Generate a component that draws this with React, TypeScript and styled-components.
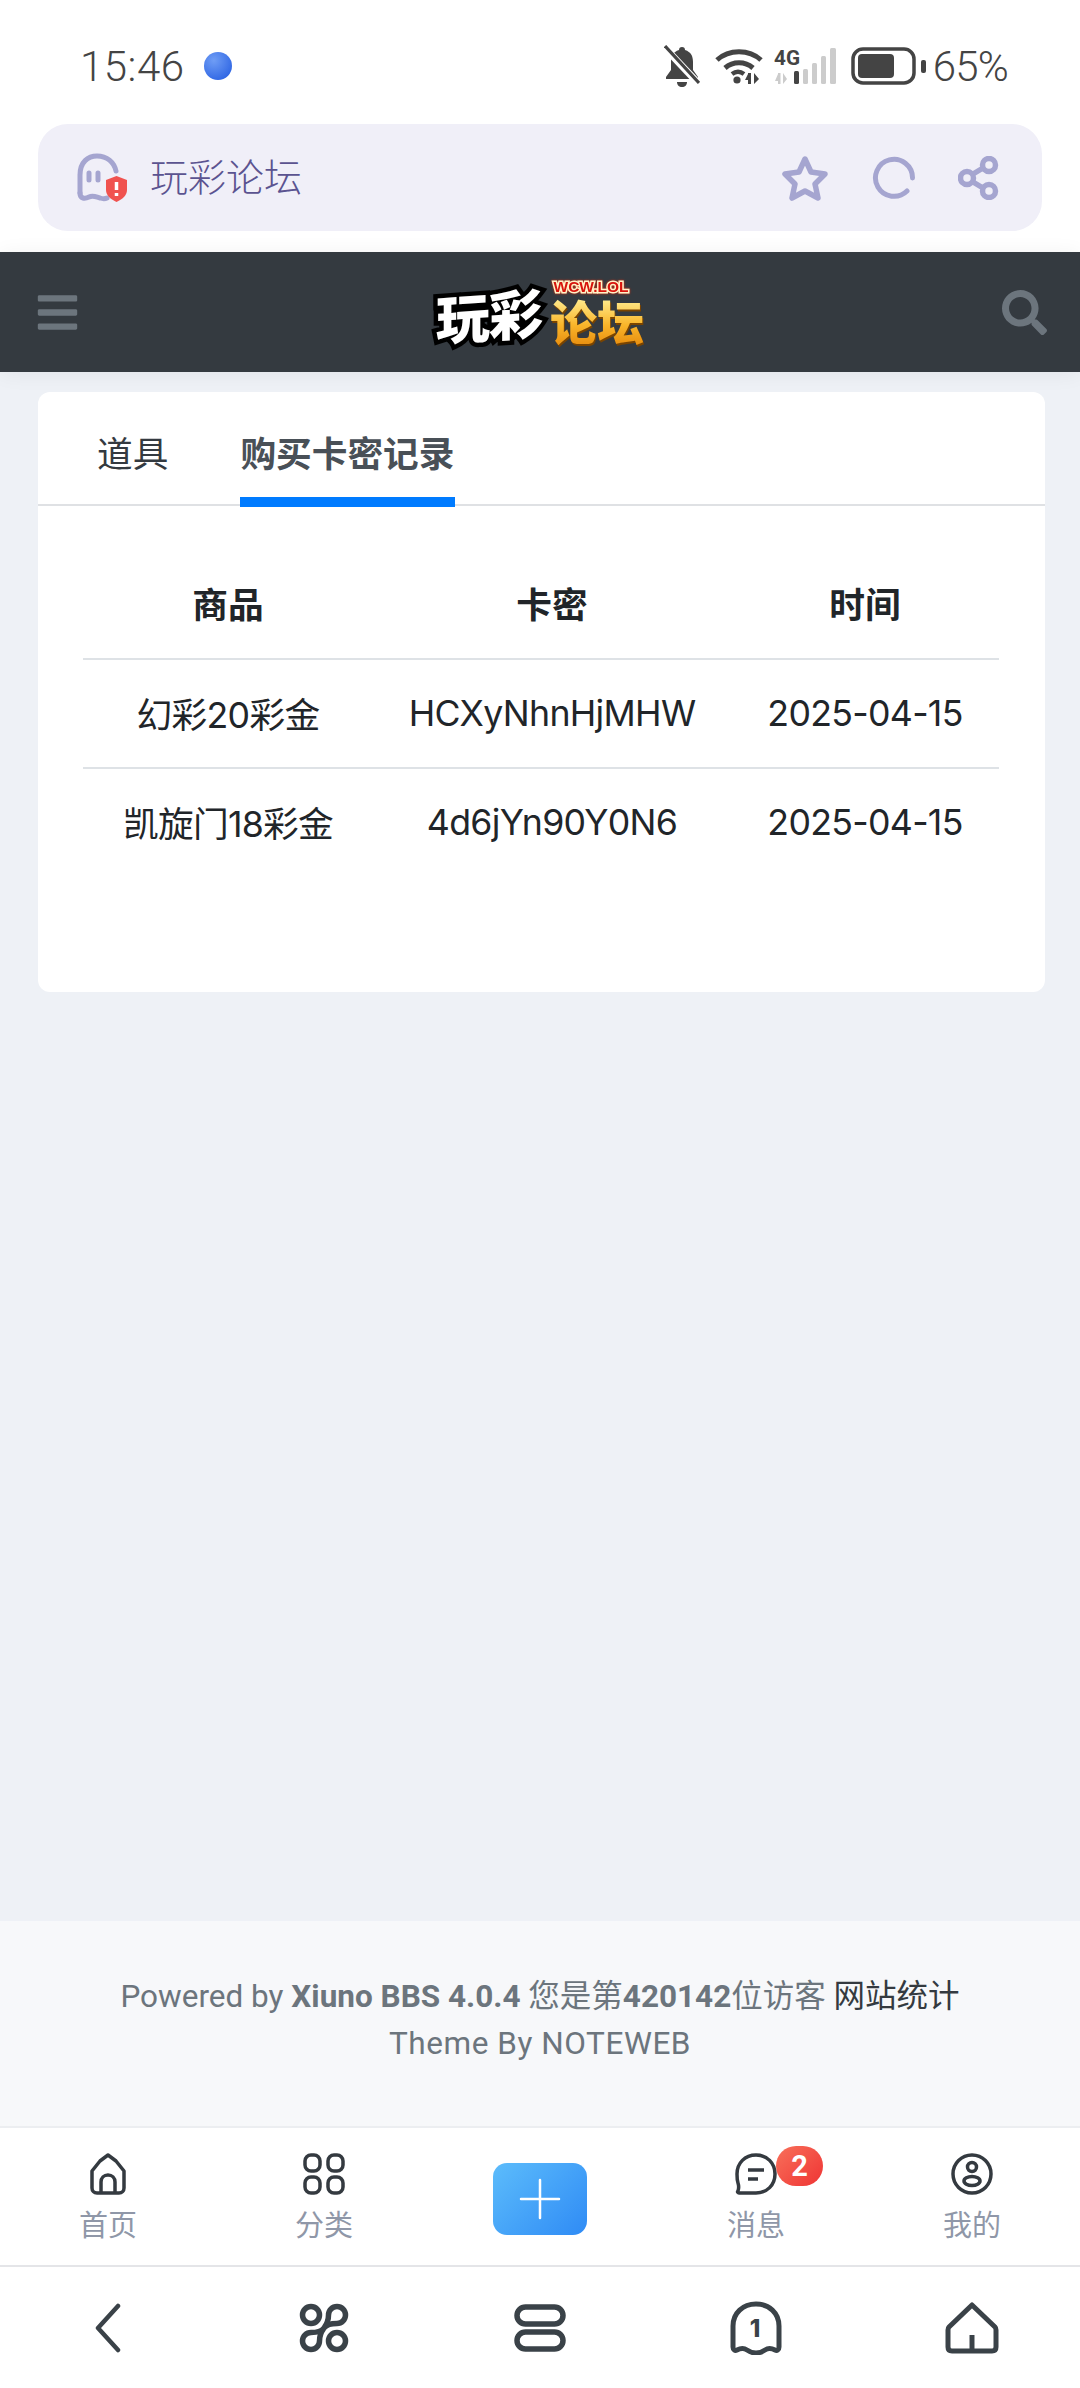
import React from "react";
import styled, { createGlobalStyle } from "styled-components";
import { FaBars, FaSearch } from "react-icons/fa";

const CJK = `Roboto, "Noto Sans CJK SC", sans-serif`;

const GlobalStyle = createGlobalStyle`
  html, body {
    margin: 0;
    padding: 0;
  }

  body {
    background: #eef1f6;
    font-family: ${CJK};
  }
`;

const records = [
  { name: "幻彩20彩金", code: "HCXyNhnHjMHW", date: "2025-04-15" },
  { name: "凯旋门18彩金", code: "4d6jYn90Y0N6", date: "2025-04-15" },
];

const App = () => {
  return (
    <Page>
      <GlobalStyle />
      <BrowserTop>
        <StatusBar>
          <StatusLeft>
            <Clock>15:46</Clock>
            <PlanetDot />
          </StatusLeft>
          <StatusRight>
            <svg width="36" height="42" viewBox="0 0 36 42">
              <path d="M18 2c2 0 3 1 3 3 6 2 8 6 8 12v8l5 7v2H2v-2l5-7v-8c0-6 2-10 8-12 0-2 1-3 3-3z" fill="#444" />
              <path d="M13 37h10c0 3-2 5-5 5s-5-2-5-5z" fill="#444" />
              <path d="M1 3l33 35" stroke="#fff" strokeWidth="7" />
              <path d="M1 1l34 37" stroke="#444" strokeWidth="3.2" />
            </svg>
            <WifiIcon width="48" height="36" viewBox="0 0 48 36">
              <path d="M2 12C14 1 34 1 46 12" stroke="#444" strokeWidth="5" fill="none" />
              <path d="M10 20c8-7 20-7 28 0" stroke="#444" strokeWidth="5" fill="none" />
              <path d="M17 26c4-3 8-3 12 0" stroke="#444" strokeWidth="4.5" fill="none" />
              <circle cx="22" cy="32" r="3.6" fill="#444" />
              <path d="M33 36V25h3v11zM30 32l3-6v6zM39 25v11l5-5z" fill="#444" />
            </WifiIcon>
            <svg width="62" height="38" viewBox="0 0 62 38">
              <text x="0" y="18" fontFamily="Roboto, sans-serif" fontWeight="700" fontSize="20" textLength="26" lengthAdjust="spacingAndGlyphs" fill="#444">4G</text>
              <path d="M4 37V26h2.500v11zM1 34l3-7v7zM9 26v11l4-5z" fill="#ccc" />
              <rect x="20" y="24" width="5" height="13" rx="1.500" fill="#444" />
              <rect x="29" y="22" width="5" height="15" rx="1.500" fill="#ccc" />
              <rect x="38" y="16" width="5" height="21" rx="1.500" fill="#ccc" />
              <rect x="47" y="9" width="5" height="28" rx="1.500" fill="#ccc" />
              <rect x="56" y="1" width="6" height="36" rx="1.500" fill="#ccc" />
            </svg>
            <BatteryIcon width="75" height="38" viewBox="0 0 75 38">
              <rect x="2" y="2" width="61" height="34" rx="10" fill="none" stroke="#444" strokeWidth="3.500" />
              <rect x="7" y="7" width="36" height="24" rx="4" fill="#444" />
              <rect x="70" y="13" width="5" height="13" rx="2" fill="#444" />
            </BatteryIcon>
            <Percent>65%</Percent>
          </StatusRight>
        </StatusBar>
        <UrlBar>
          <UrlTitle>
            <svg width="52" height="50" viewBox="0 0 52 50">
              <path d="M3 40V22C3 9 11 3 20 3c10 0 17 6 19 15" fill="none" stroke="#a5a5d0" strokeWidth="5" strokeLinecap="round" />
              <path d="M3 40c0 6 5 6 9 4s7 0 11 1c3 1 5 1 7 0" fill="none" stroke="#a5a5d0" strokeWidth="5" strokeLinecap="round" />
              <path d="M12 20v7M21 20v7" stroke="#a5a5d0" strokeWidth="5" strokeLinecap="round" />
              <path d="M39.500 23l10.500 4v10c0 5-4 9-10.500 12-6.500-3-10.500-7-10.500-12V27z" fill="#f0524f" />
              <path d="M39.500 29v8M39.500 40v3" stroke="#fff" strokeWidth="3.500" />
            </svg>
            <UrlText>玩彩论坛</UrlText>
          </UrlTitle>
          <UrlActions>
            <svg width="48" height="46" viewBox="0 0 48 46">
              <path d="M24 4l6 13 14 2-10 10 3 14-13-7-13 7 3-14L4 19l14-2z" fill="none" stroke="#a5a5d0" strokeWidth="5.500" strokeLinejoin="round" />
            </svg>
            <svg width="44" height="44" viewBox="0 0 44 44">
              <path d="M40.500 22A18.500 18.500 0 1 0 35 35" fill="none" stroke="#a5a5d0" strokeWidth="5" strokeLinecap="round" />
            </svg>
            <svg width="42" height="44" viewBox="0 0 42 44">
              <circle cx="9" cy="22" r="6.500" fill="none" stroke="#a5a5d0" strokeWidth="5.500" />
              <circle cx="31" cy="9" r="6.500" fill="none" stroke="#a5a5d0" strokeWidth="5.500" />
              <circle cx="31" cy="35" r="6.500" fill="none" stroke="#a5a5d0" strokeWidth="5.500" />
              <path d="M15 18l10-6M15 26l10 6" stroke="#a5a5d0" strokeWidth="5.500" />
            </svg>
          </UrlActions>
        </UrlBar>
      </BrowserTop>

      <SiteHeader>
        <FaBars size={45} color="#6c757d" />
        <Logo>
          <LogoWhite>玩彩</LogoWhite>
          <LogoGoldColumn>
            <LogoTag>WCW.LOL</LogoTag>
            <LogoGold>论坛</LogoGold>
          </LogoGoldColumn>
        </Logo>
        <FaSearch size={45} color="#6c757d" />
      </SiteHeader>

      <Main>
        <Card>
          <Tabs>
            <Tab>道具</Tab>
            <Tab $active>购买卡密记录</Tab>
          </Tabs>
          <CardBody>
            <RecordTable>
              <colgroup>
                <col width="290" />
                <col width="358" />
                <col width="268" />
              </colgroup>
              <thead>
                <tr>
                  <HeadCell>商品</HeadCell>
                  <HeadCell>卡密</HeadCell>
                  <HeadCell>时间</HeadCell>
                </tr>
              </thead>
              <tbody>
                {records.map((record) => (
                  <tr key={record.code}>
                    <BodyCell>{record.name}</BodyCell>
                    <BodyCell>{record.code}</BodyCell>
                    <BodyCell>{record.date}</BodyCell>
                  </tr>
                ))}
              </tbody>
            </RecordTable>
          </CardBody>
        </Card>
      </Main>

      <Footer>
        <div>
          Powered by <strong>Xiuno BBS 4.0.4</strong> 您是第<strong>420142</strong>位访客 <FooterLink>网站统计</FooterLink>
        </div>
        <ThemeLine>Theme By NOTEWEB</ThemeLine>
      </Footer>

      <TabBar>
        <TabBarItem>
          <svg width="42" height="42" viewBox="0 0 42 42">
            <path d="M21 2l8 6 8 10v17c0 3-2 5-5 5H10c-3 0-5-2-5-5V18l8-10z" fill="none" stroke="#343a40" strokeWidth="3.500" strokeLinejoin="round" />
            <path d="M14 39V29c0-4 3-7 7-7s7 3 7 7v10" fill="none" stroke="#343a40" strokeWidth="3.500" />
          </svg>
          <TabBarLabel>首页</TabBarLabel>
        </TabBarItem>
        <TabBarItem>
          <svg width="42" height="42" viewBox="0 0 42 42">
            <rect x="2" y="2" width="15" height="16" rx="6" fill="none" stroke="#343a40" strokeWidth="3.500" />
            <rect x="25" y="2" width="15" height="16" rx="6" fill="none" stroke="#343a40" strokeWidth="3.500" />
            <rect x="2" y="24" width="15" height="16" rx="6" fill="none" stroke="#343a40" strokeWidth="3.500" />
            <rect x="25" y="24" width="15" height="16" rx="6" fill="none" stroke="#343a40" strokeWidth="3.500" />
          </svg>
          <TabBarLabel>分类</TabBarLabel>
        </TabBarItem>
        <TabBarItem>
          <PlusButton>
            <svg width="42" height="42" viewBox="0 0 42 42">
              <path d="M21 2v38M2 21h38" stroke="#fff" strokeWidth="2.500" strokeLinecap="round" />
            </svg>
          </PlusButton>
        </TabBarItem>
        <TabBarItem>
          <IconWrap>
            <svg width="42" height="42" viewBox="0 0 42 42">
              <path d="M21 2c11 0 19 8 19 19s-8 19-19 19c-5 0-13 0-17 0-1 0-2-1-1-2 1-3 1-5 0-8-1-3-1-6-1-9C2 10 10 2 21 2z" fill="none" stroke="#343a40" strokeWidth="3.500" strokeLinejoin="round" />
              <path d="M13 17h16M13 26h10" stroke="#343a40" strokeWidth="3.500" />
            </svg>
            <Badge>2</Badge>
          </IconWrap>
          <TabBarLabel>消息</TabBarLabel>
        </TabBarItem>
        <TabBarItem>
          <svg width="42" height="42" viewBox="0 0 42 42">
            <circle cx="21" cy="21" r="19" fill="none" stroke="#343a40" strokeWidth="3.500" />
            <circle cx="21" cy="14" r="4.500" fill="none" stroke="#343a40" strokeWidth="3.500" />
            <ellipse cx="21" cy="28" rx="8" ry="4.500" fill="none" stroke="#343a40" strokeWidth="3.500" />
          </svg>
          <TabBarLabel>我的</TabBarLabel>
        </TabBarItem>
      </TabBar>

      <SystemNav>
        <svg width="26" height="50" viewBox="0 0 26 50">
          <path d="M23 3L3 25l20 22" fill="none" stroke="#3a4248" strokeWidth="4.500" strokeLinecap="round" strokeLinejoin="round" />
        </svg>
        <svg width="50" height="50" viewBox="0 0 50 50">
          <circle cx="12" cy="12" r="8.500" fill="none" stroke="#3a4248" strokeWidth="5.500" />
          <circle cx="38" cy="38" r="8.500" fill="none" stroke="#3a4248" strokeWidth="5.500" />
          <path d="M38 20.500a8.500 8.500 0 1 0-8.500-8.500c0 7-2 9.500-4.500 13s-6 4.500-13 4.500a8.500 8.500 0 1 0 8.500 8.500c0-7 2-9.500 4.500-13s6-4.500 13-4.500z" fill="none" stroke="#3a4248" strokeWidth="5.500" strokeLinejoin="round" />
        </svg>
        <svg width="52" height="48" viewBox="0 0 52 48">
          <rect x="3" y="3" width="46" height="17" rx="8.500" fill="none" stroke="#3a4248" strokeWidth="5.500" />
          <rect x="3" y="28" width="46" height="17" rx="8.500" fill="none" stroke="#3a4248" strokeWidth="5.500" />
        </svg>
        <svg width="52" height="54" viewBox="0 0 52 54">
          <path d="M3 46V25C3 12 13 3 26 3s23 9 23 22v21c0 3-2 4-4 3-4-2-7-2-10 0-6 4-12 4-18 0-3-2-6-2-10 0-2 1-4 0-4-3z" fill="none" stroke="#3a4248" strokeWidth="5" strokeLinejoin="round" />
          <text x="25" y="36" textAnchor="middle" fontFamily="Inter, sans-serif" fontWeight="800" fontSize="24" fill="#3a4248">1</text>
        </svg>
        <svg width="54" height="52" viewBox="0 0 54 52">
          <path d="M27 3L50 25Q51 26 51 28V45Q51 49 47 49H7Q3 49 3 45V28Q3 26 4 25Z" fill="none" stroke="#3a4248" strokeWidth="5" strokeLinejoin="round" />
          <path d="M27 33v14" stroke="#3a4248" strokeWidth="5" />
        </svg>
      </SystemNav>
    </Page>
  );
};

const Page = styled.div`
  display: flex;
  flex-direction: column;
  width: 1080px;
  height: 2388px;
  overflow: hidden;
  background: #eef1f6;
`;

const BrowserTop = styled.div`
  height: 252px;
  flex: none;
  background: #fff;
`;

const StatusBar = styled.div`
  height: 124px;
  padding: 8px 72px 0 80px;
  box-sizing: border-box;
  display: flex;
  justify-content: space-between;
  align-items: center;
`;

const StatusLeft = styled.div`
  display: flex;
  align-items: center;
  gap: 19px;
`;

const StatusRight = styled.div`
  display: flex;
  align-items: center;
  gap: 11px;
`;

const WifiIcon = styled.svg`
  margin-left: 4px;
`;

const BatteryIcon = styled.svg`
  margin-left: 4px;
  margin-right: -4px;
`;

const Clock = styled.span`
  font-size: 42px;
  font-weight: 300;
  color: #444;
  letter-spacing: 0.5px;
`;

const Percent = styled(Clock)`
  letter-spacing: -0.8px;
`;

const PlanetDot = styled.span`
  width: 28px;
  height: 28px;
  border-radius: 50%;
  background: radial-gradient(circle at 35% 30%, #6f9df5, #2f66e4 80%);
`;

const UrlBar = styled.div`
  height: 107px;
  margin: 0 38px;
  padding: 0 42px 0 39px;
  border-radius: 30px;
  background: #f0eff8;
  display: flex;
  justify-content: space-between;
  align-items: center;
`;

const UrlTitle = styled.div`
  display: flex;
  align-items: center;
  gap: 21px;
`;

const UrlText = styled.span`
  font-size: 38px;
  line-height: 50px;
  font-weight: 300;
  color: #5b5390;
`;

const UrlActions = styled.div`
  display: flex;
  align-items: center;
  gap: 42.5px;
`;

const SiteHeader = styled.header`
  height: 120px;
  flex: none;
  padding: 0 33px 0 35px;
  background: #343a40;
  display: flex;
  justify-content: space-between;
  align-items: center;
  box-shadow: 0 2px 20px rgba(0, 0, 0, 0.06);
  position: relative;
`;

const Logo = styled.div`
  display: flex;
  align-items: flex-end;
  gap: 8px;
  margin-left: -2px;
  font-family: "Noto Sans CJK SC", sans-serif;
  font-weight: 900;
`;

const LogoWhite = styled.span`
  font-size: 54px;
  line-height: 62px;
  letter-spacing: -1px;
  color: #fff;
  -webkit-text-stroke: 9px #000;
  paint-order: stroke fill;
  transform: skewY(-4deg);
`;

const LogoGoldColumn = styled.div`
  display: flex;
  flex-direction: column;
  align-items: center;
`;

const LogoTag = styled.span`
  font-family: "Liberation Sans", sans-serif;
  font-size: 15.5px;
  font-weight: 700;
  line-height: 16px;
  margin-left: -12px;
  color: #d8140c;
  -webkit-text-stroke: 3px #fff3c8;
  paint-order: stroke fill;
  filter: drop-shadow(0 0 1px #e8300c);
`;

const LogoGold = styled.span`
  font-size: 47px;
  line-height: 50px;
  background: linear-gradient(180deg, #ffe98a 10%, #f9b52a 60%, #e88f10 100%);
  -webkit-background-clip: text;
  background-clip: text;
  color: transparent;
  filter: drop-shadow(1px 2px 0 #7a4400);
`;

const Main = styled.main`
  flex: 1;
  padding: 20px 35px 0 38px;
`;

const Card = styled.section`
  height: 600px;
  border-radius: 12px;
  background: #fff;
`;

const Tabs = styled.nav`
  height: 114px;
  padding-left: 59px;
  box-sizing: border-box;
  border-bottom: 2px solid #dfe1e4;
  display: flex;
  gap: 72px;
`;

const Tab = styled.div<{ $active?: boolean }>`
  height: 115px;
  box-sizing: border-box;
  padding-top: 38px;
  font-size: 35.7px;
  line-height: 50px;
  font-weight: ${(p) => (p.$active ? 700 : 400)};
  color: ${(p) => (p.$active ? "#495057" : "#343a40")};
  border-bottom: 10px solid ${(p) => (p.$active ? "#007bff" : "transparent")};
`;

const CardBody = styled.div`
  padding: 41px 45px 0;
`;

const RecordTable = styled.table`
  width: 916px;
  border-collapse: collapse;
  table-layout: fixed;
  color: #212529;
  font-family: Inter, "Noto Sans CJK SC", sans-serif;
`;

const HeadCell = styled.th`
  height: 111px;
  padding: 0;
  font-size: 35.7px;
  font-weight: 700;
  text-align: center;
  border-bottom: 2px solid #dee2e6;
`;

const BodyCell = styled.td`
  height: 105px;
  padding: 0 0 2px;
  font-size: 35.7px;
  font-weight: 400;
  letter-spacing: -0.7px;
  text-align: center;

  tr:first-child > & {
    border-bottom: 2px solid #dee2e6;
  }
`;

const Footer = styled.footer`
  height: 207px;
  flex: none;
  box-sizing: border-box;
  padding-top: 52px;
  background: #f7f8fa;
  border-bottom: 2px solid #eceef1;
  text-align: center;
  font-size: 31.5px;
  line-height: 47px;
  color: #6c757d;
`;

const ThemeLine = styled.div`
  letter-spacing: 0.55px;
`;

const FooterLink = styled.span`
  color: #343a40;
`;

const TabBar = styled.div`
  height: 139px;
  flex: none;
  box-sizing: border-box;
  background: #fff;
  border-bottom: 2px solid #e4e5e8;
  display: grid;
  grid-template-columns: repeat(5, 1fr);
`;

const TabBarItem = styled.div`
  padding-top: 25px;
  display: flex;
  flex-direction: column;
  align-items: center;
  gap: 11px;
`;

const TabBarLabel = styled.span`
  font-size: 29px;
  line-height: 40px;
  color: #8f97a8;
`;

const PlusButton = styled.div`
  width: 94px;
  height: 72px;
  margin-top: 10px;
  border-radius: 14px;
  background: linear-gradient(135deg, #5cbcfb, #2f8bf5);
  display: flex;
  align-items: center;
  justify-content: center;
`;

const IconWrap = styled.div`
  position: relative;
  height: 42px;
`;

const Badge = styled.span`
  position: absolute;
  left: 41px;
  top: -7px;
  width: 47px;
  height: 40px;
  border-radius: 20px;
  background: linear-gradient(135deg, #f8705a, #ef3434);
  color: #fff;
  font-size: 29px;
  font-weight: 700;
  line-height: 40px;
  text-align: center;
`;

const SystemNav = styled.div`
  height: 121px;
  flex: none;
  background: #fff;
  display: grid;
  grid-template-columns: repeat(5, 1fr);
  justify-items: center;
  align-items: center;
`;

export default App;
